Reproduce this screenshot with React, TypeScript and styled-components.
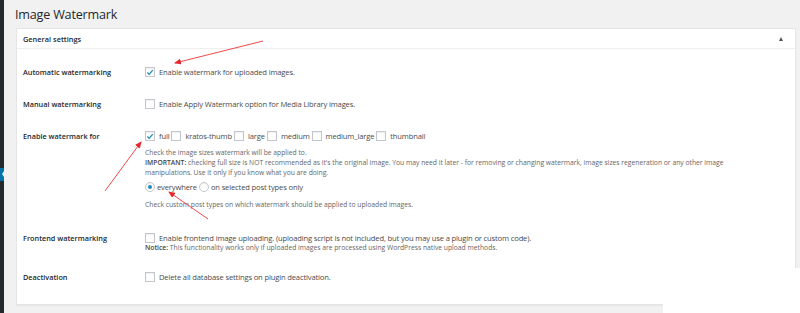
import styled, { createGlobalStyle } from "styled-components";

const GlobalStyle = createGlobalStyle`
  html, body {
    margin: 0;
    padding: 0;
    background: #f1f1f1;
  }
  body {
    width: 800px;
    height: 313px;
    overflow: hidden;
    font-family: "Open Sans", "Noto Sans", sans-serif;
  }
`;

const sizes = ["full", "kratos-thumb", "large", "medium", "medium_large", "thumbnail"];

const Checkbox = ({ checked }: { checked?: boolean }) => (
  <Box>
    {checked && (
      <svg width="9" height="9" viewBox="0 0 9 9">
        <path d="M1.6 4.6 L3.6 6.6 L7.6 1.8" fill="none" stroke="#1e8cbe" strokeWidth="1.5" />
      </svg>
    )}
  </Box>
);

const Radio = ({ checked }: { checked?: boolean }) => (
  <RadioCircle>{checked && <Dot />}</RadioCircle>
);

const App = () => {
  return (
    <Screen>
      <GlobalStyle />
      <AdminMenu>
        <MenuCurrent />
      </AdminMenu>
      <Content>
        <Title>Image Watermark</Title>
        <Panel>
          <PanelHeader>
            <HeaderTitle>General settings</HeaderTitle>
            <Toggle />
          </PanelHeader>

          <Row $top={17} $bottom={10}>
            <Label>Automatic watermarking</Label>
            <Field>
              <Line>
                <Option>
                  <Checkbox checked />
                  Enable watermark for uploaded images.
                </Option>
              </Line>
            </Field>
          </Row>

          <Row $top={10} $bottom={10}>
            <Label>Manual watermarking</Label>
            <Field>
              <Line>
                <Option>
                  <Checkbox />
                  Enable Apply Watermark option for Media Library images.
                </Option>
              </Line>
            </Field>
          </Row>

          <Row $top={10} $bottom={10}>
            <Label>Enable watermark for</Label>
            <Field>
              <Line>
                {sizes.map((s) => (
                  <Option key={s}>
                    <Checkbox checked={s === "full"} />
                    {s}
                  </Option>
                ))}
              </Line>
              <Desc $gap={6}>
                Check the image sizes watermark will be applied to.
                <br />
                <strong>IMPORTANT:</strong> checking full size is NOT recommended as it's the original image. You may
                need it later - for removing or changing watermark, image sizes regeneration or any other image
                <br />
                manipulations. Use it only if you know what you are doing.
              </Desc>
              <Line $gap={3}>
                <Option $tight>
                  <Radio checked />
                  everywhere
                </Option>
                <Option $tight>
                  <Radio />
                  on selected post types only
                </Option>
              </Line>
              <Desc $gap={7}>Check custom post types on which watermark should be applied to uploaded images.</Desc>
            </Field>
          </Row>

          <Row $top={12} $bottom={8}>
            <Label>Frontend watermarking</Label>
            <Field>
              <Line>
                <Option>
                  <Checkbox />
                  Enable frontend image uploading. (uploading script is not included, but you may use a plugin or
                  custom code).
                </Option>
              </Line>
              <Desc $gap={-1}>
                <strong>Notice:</strong> This functionality works only if uploaded images are processed using
                WordPress native upload methods.
              </Desc>
            </Field>
          </Row>

          <Row $top={10} $bottom={23}>
            <Label>Deactivation</Label>
            <Field>
              <Line>
                <Option>
                  <Checkbox />
                  Delete all database settings on plugin deactivation.
                </Option>
              </Line>
            </Field>
          </Row>
        </Panel>
      </Content>

      <Arrows width="800" height="313" viewBox="0 0 800 313">
        <defs>
          <marker id="head" markerWidth="7" markerHeight="6" refX="6" refY="3" orient="auto" markerUnits="userSpaceOnUse">
            <path d="M0 0 L7 3 L0 6 Z" fill="#e8272b" />
          </marker>
        </defs>
        <line x1="263" y1="41" x2="175" y2="63" stroke="#ee4a4a" strokeWidth="1" markerEnd="url(#head)" />
        <line x1="105" y1="191" x2="141" y2="142" stroke="#ee4a4a" strokeWidth="1" markerEnd="url(#head)" />
        <line x1="208" y1="219" x2="169" y2="192" stroke="#ee4a4a" strokeWidth="1" markerEnd="url(#head)" />
      </Arrows>
      <CropMask />
    </Screen>
  );
};

export default App;

const Screen = styled.div`
  position: relative;
  display: flex;
  width: 800px;
  height: 313px;
  overflow: hidden;
  background: #f1f1f1;
`;

const AdminMenu = styled.div`
  position: relative;
  flex: none;
  width: 4px;
  height: 100%;
  background: #23282d;
`;

const MenuCurrent = styled.div`
  position: absolute;
  top: 168px;
  left: 0;
  width: 4px;
  height: 13px;
  background: #0073aa;

  &::after {
    content: "";
    position: absolute;
    right: 0;
    top: 3px;
    border-style: solid;
    border-width: 3.5px 2.5px 3.5px 0;
    border-color: transparent #f1f1f1 transparent transparent;
  }
`;

const Content = styled.div`
  flex: 1;
  padding: 0 4px 0 12px;
`;

const Title = styled.h1`
  margin: 0 0 0 -1px;
  height: 28px;
  line-height: 30px;
  font-size: 12.6px;
  font-weight: 400;
  letter-spacing: -0.2px;
  color: #23282d;
`;

const Panel = styled.div`
  height: 277px;
  box-sizing: border-box;
  background: #fff;
  border: 1px solid #e5e5e5;
  box-shadow: 0 1px 1px rgba(0, 0, 0, 0.04);
`;

const PanelHeader = styled.div`
  display: flex;
  align-items: center;
  justify-content: space-between;
  height: 19px;
  padding: 0 12px 0 6px;
  border-bottom: 1px solid #eee;
`;

const HeaderTitle = styled.span`
  font-size: 7.4px;
  font-weight: 600;
  color: #23282d;
`;

const Toggle = styled.span`
  width: 0;
  height: 0;
  border-style: solid;
  border-width: 0 2.5px 4px 2.5px;
  border-color: transparent transparent #555 transparent;
`;

const Row = styled.div<{ $top: number; $bottom: number }>`
  display: flex;
  padding: ${(p) => p.$top}px 0 ${(p) => p.$bottom}px 6px;
`;

const Label = styled.div`
  flex: none;
  width: 122px;
  line-height: 12px;
  font-size: 7.3px;
  font-weight: 600;
  color: #23282d;
`;

const Field = styled.div`
  display: flex;
  flex-direction: column;
  flex: 1;
`;

const Line = styled.div<{ $gap?: number }>`
  display: flex;
  align-items: center;
  height: 12px;
  margin-top: ${(p) => p.$gap ?? 0}px;
  font-size: 7.6px;
  letter-spacing: -0.15px;
  color: #4a4a4a;
  white-space: nowrap;
`;

const Option = styled.label<{ $tight?: boolean }>`
  display: inline-flex;
  align-items: center;
  gap: ${(p) => (p.$tight ? 2 : 4)}px;
  margin-right: 2px;
`;

const Box = styled.span`
  display: inline-flex;
  align-items: center;
  justify-content: center;
  box-sizing: border-box;
  width: 10px;
  height: 10px;
  border: 1px solid #c3c7cb;
  background: #fff;
  box-shadow: inset 0 1px 2px rgba(0, 0, 0, 0.07);
`;

const RadioCircle = styled(Box)`
  border-radius: 50%;
`;

const Dot = styled.span`
  width: 4px;
  height: 4px;
  border-radius: 50%;
  background: #1e8cbe;
`;

const Desc = styled.div<{ $gap: number }>`
  margin-top: ${(p) => p.$gap}px;
  font-size: 6.75px;
  line-height: 10px;
  color: #666;
  white-space: nowrap;

  strong {
    font-weight: 600;
    color: #444;
  }
`;

const Arrows = styled.svg`
  position: absolute;
  left: 0;
  top: 0;
  pointer-events: none;
`;

const CropMask = styled.div`
  position: absolute;
  left: 663px;
  top: 268px;
  right: 0;
  bottom: 0;
  background: #fff;
`;
